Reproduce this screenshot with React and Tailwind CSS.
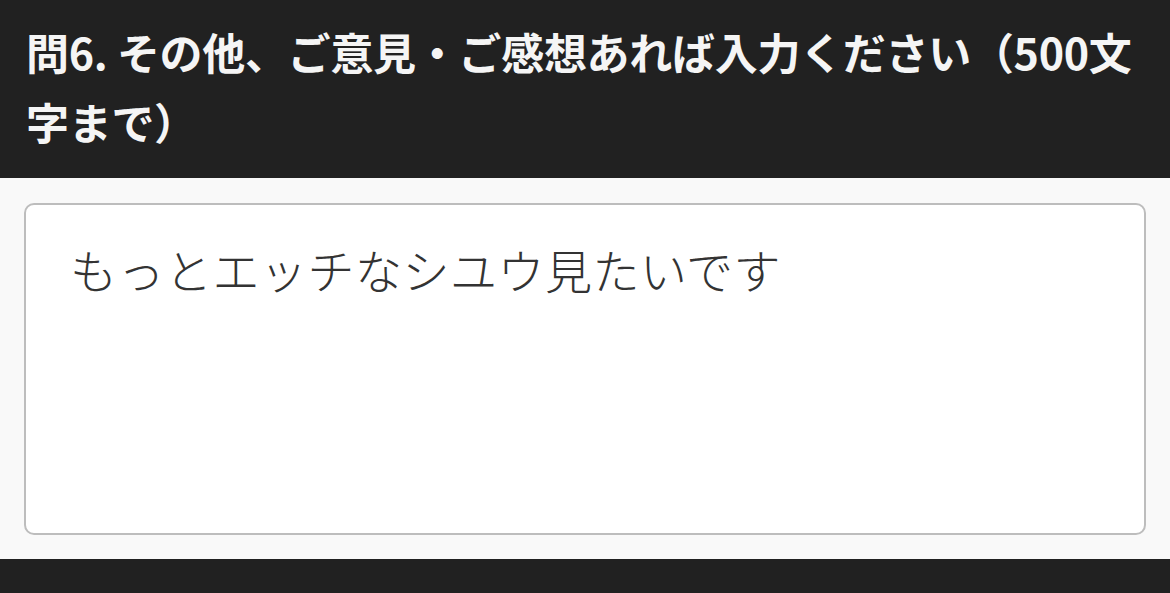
export default function App() {
  return (
    <div
      className="min-h-screen w-full bg-[#212121]"
      style={{ fontFamily: '"Noto Sans CJK JP", "Noto Sans", sans-serif' }}
    >
      <header className="bg-[#212121] px-[26px] pt-[16px] pb-[22px]">
        <h1 className="text-[43px] font-bold leading-[70px] tracking-[-0.3px] text-[#f5f5f5]">
          問6. その他、ご意見・ご感想あれば入力ください（500文字まで）
        </h1>
      </header>

      <main className="bg-[#f9f9f9] px-[24px] pt-[25px] pb-[24px]">
        <div className="h-[332px] rounded-[10px] border-2 border-[#bdbdbd] bg-white pl-[44px] pr-[24px] pt-[31px]">
          <p className="text-[47px] font-light leading-[66px] tracking-[0.5px] text-[#333333]">
            もっとエッチなシユウ見たいです
          </p>
        </div>
      </main>
    </div>
  );
}
